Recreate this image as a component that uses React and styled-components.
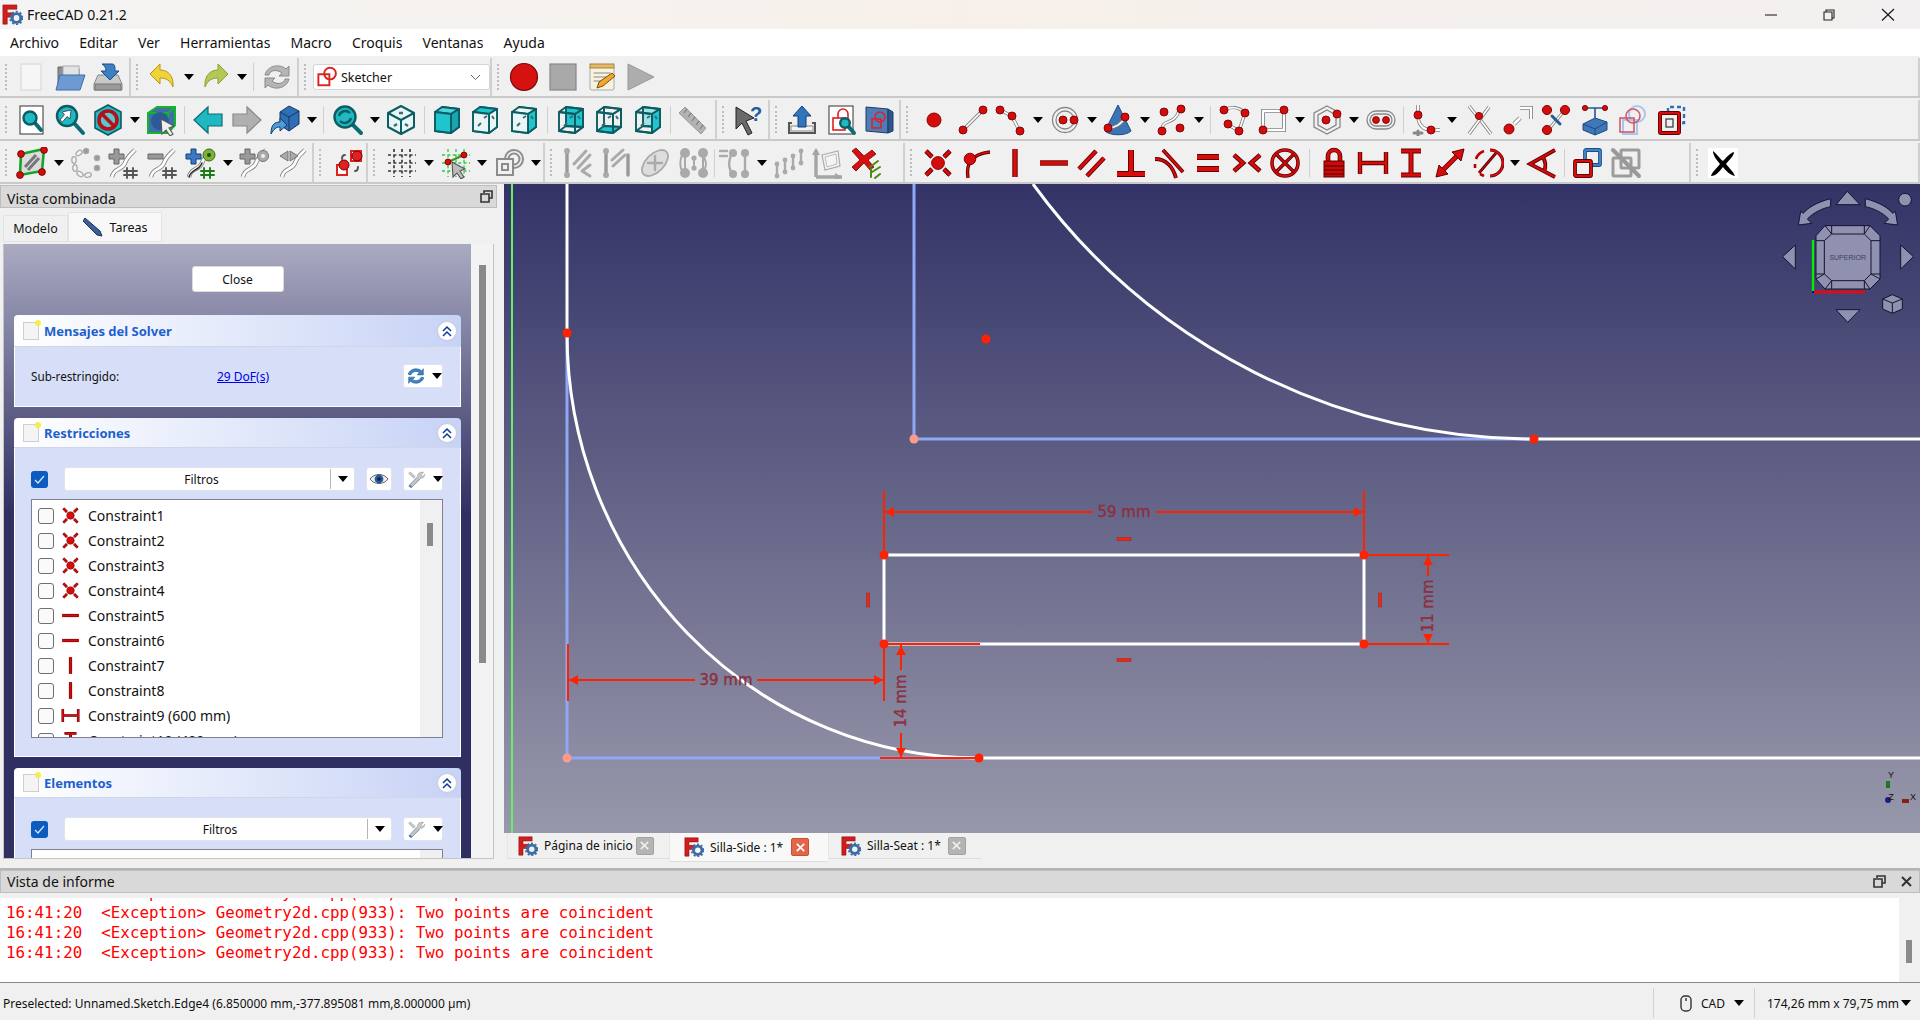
import React from "react";
import styled, { createGlobalStyle } from "styled-components";

const UI_FONT = `"Noto Sans", "Open Sans", sans-serif`;

const GlobalStyle = createGlobalStyle`
  html, body { margin: 0; padding: 0; background: #f0f0f0; }
  * { box-sizing: border-box; }
  body { font-family: ${UI_FONT}; color: #111; overflow: hidden; }
`;

// small drawing helpers for the toolbar icons
const D = ({ x, y, r = 4 }) => <circle cx={x} cy={y} r={r} fill="#d40c0c" stroke="#7a0000" strokeWidth=".9" />;
const W = ({ d, w = 3.4 }) => (
  <>
    <path d={d} fill="none" stroke="#808080" strokeWidth={w} />
    <path d={d} fill="none" stroke="#fff" strokeWidth={w - 1.7} />
  </>
);
const R = ({ d, w = 5 }) => (
  <>
    <path d={d} fill="none" stroke="#5e0000" strokeWidth={w} />
    <path d={d} fill="none" stroke="#d90b0b" strokeWidth={w - 1.8} />
  </>
);
const L = ({ d, c = "#999", w = 3, f = "none", o = 1 }) => (
  <path d={d} fill={f} stroke={c} strokeWidth={w} opacity={o} strokeLinecap="round" strokeLinejoin="round" />
);
const Mag = ({ x = 13, y = 13, r = 8.5, e = 29 }) => (
  <>
    <L d={`M${x + r * 0.7} ${y + r * 0.7}L${e} ${e}`} c="#0b6d74" w={4} />
    <circle cx={x} cy={y} r={r} fill="#1fb9c2" stroke="#0b5c63" strokeWidth="2.4" />
  </>
);
const Box = ({ front = "none", top = "none", side = "none", back = "none", floor = "none", marks }) => (
  <g stroke="#0b5c63" strokeWidth="1.9" strokeLinejoin="round">
    <path d="M11 3L28 5V23L11 22Z" fill={back} />
    <path d="M4 27L11 22L28 23L20 29Z" fill={floor} />
    <path d="M4 8L11 3L28 5L20 10Z" fill={top} />
    <path d="M20 10L28 5V23L20 29Z" fill={side} />
    <path d="M4 8L20 10V29L4 27Z" fill={front} />
    {marks && <path d="M9 22L12 19M15 14L18 12M23 12L25 15" stroke="#3f6a70" strokeWidth="2" fill="none" />}
  </g>
);
const Cursor = ({ x = 14, y = 14, c = "#bbb" }) => (
  <path d={`M${x} ${y}l13 7l-5 2l4 6l-3 2l-4 -6l-4 4z`} fill={c} stroke="#555" strokeWidth="1.1" />
);
const Hash = ({ c = "#555" }) => <L d="M19 21V31M25 21V31M16 24H29M16 28H29" c={c} w={1.9} />;
const Plus = ({ c = "#999", s = "#666" }) => (
  <path d="M6 2h5v5h5v5h-5v5H6v-5H1V7h5z" fill={c} stroke={s} strokeWidth="1" />
);
const Curve = () => <W d="M4 30C6 20 14 24 17 16C19 10 22 8 27 3" w={4.4} />;

const ICONS = {
  new: <rect x="6" y="3" width="20" height="26" fill="#f6f6f6" stroke="#ddd" strokeWidth="1.4" />,
  open: (
    <>
      <path d="M4 6h9l2 2h10v18H4z" fill="#8b8f95" stroke="#666" />
      <rect x="9" y="5" width="16" height="14" fill="#e3e3e3" stroke="#aaa" />
      <path d="M6 14h25l-5 15H2z" fill="#6d9ad2" stroke="#3f6ea8" />
    </>
  ),
  save: (
    <>
      <path d="M6 14h20l4 9v6H2v-6z" fill="#c9c9c9" stroke="#888" />
      <rect x="3" y="23" width="26" height="6" fill="#9a9a9a" stroke="#777" />
      <path d="M10 3h10c3 0 3 3 3 7h4l-9 9l-9-9h5c0-3 -1-5 -4-7z" fill="#3d7fc4" stroke="#1e4d86" />
    </>
  ),
  undo: <path d="M4 13L14 3V9C22 9 28 15 27 26C24 19 20 17 14 17V23Z" fill="#f0d33b" stroke="#b7980f" />,
  redo: <path d="M28 13L18 3V9C10 9 4 15 5 26C8 19 12 17 18 17V23Z" fill="#b3c956" stroke="#8aa030" />,
  refresh: (
    <>
      <path d="M4 14C6 5 18 2 25 8l3-3v10H18l3-3C16 8 9 9 8 14z" fill="#b5b5b5" stroke="#8a8a8a" />
      <path d="M28 18C26 27 14 30 7 24l-3 3V17H14l-3 3C16 24 23 23 24 18z" fill="#b5b5b5" stroke="#8a8a8a" />
    </>
  ),
  sketcher: (
    <>
      <rect x="2" y="12" width="16" height="16" fill="#fff" stroke="#d22" strokeWidth="2.8" />
      <circle cx="19" cy="11" r="8.5" fill="none" stroke="#d22" strokeWidth="2.8" />
    </>
  ),
  refreshBlue: (
    <>
      <path d="M2 13C5 3 19 0 26 7l3-4v11H18l4-4C17 6 9 8 7 14z" fill="#3e82c4" stroke="#1f5a94" />
      <path d="M30 19C27 29 13 32 6 25l-3 4V18H14l-4 4C15 26 23 24 25 18z" fill="#3e82c4" stroke="#1f5a94" />
    </>
  ),
  record: <circle cx="16" cy="16" r="13.5" fill="#d5120f" stroke="#7a0a0a" strokeWidth="1.2" />,
  stop: <rect x="3" y="3" width="26" height="26" fill="#a9a9a9" stroke="#888" strokeWidth="1.2" />,
  macro: (
    <>
      <rect x="5" y="5" width="24" height="24" rx="2" fill="#f7f3e0" stroke="#aaa" />
      <rect x="5" y="3" width="24" height="4" fill="#e3b96b" stroke="#a8843c" />
      <L d="M9 12H25M9 16H25M9 20H18" c="#888" w={1} />
      <path d="M12 27l2-6L27 12l3 3L18 25z" fill="#f0a92c" stroke="#7a4f10" />
    </>
  ),
  play: <path d="M4 3L30 16L4 29Z" fill="#adadad" stroke="#999" />,
  fitAll: (
    <>
      <rect x="5" y="2" width="23" height="28" fill="#fff" stroke="#444" strokeWidth="1.1" />
      <Mag x={15} y={14} r={6.5} e={26} />
    </>
  ),
  fitSel: (
    <>
      <Mag x={13} y={12} r={10} e={29} />
      <path d="M17 6L8 8L10.5 10.5L6 16L8.5 18L13 12.5L16 15Z" fill="#fff" stroke="#333" strokeWidth=".8" />
    </>
  ),
  noDraw: (
    <>
      <path d="M16 1L29 8V24L16 31L3 24V8Z" fill="#1fb9c2" stroke="#0b5c63" strokeWidth="1.6" />
      <circle cx="16" cy="16" r="9" fill="#5ac6ce" stroke="#b5101a" strokeWidth="3.6" />
      <path d="M10 10L22 22" stroke="#b5101a" strokeWidth="3.6" />
    </>
  ),
  select: (
    <>
      <path d="M2 9L11 3H29V21L22 29H2Z" fill="#3e6fa8" stroke="#15b52b" strokeWidth="2" />
      <path d="M2 9H22V29M22 9L29 3" fill="none" stroke="#15b52b" strokeWidth="2" />
      <circle cx="14" cy="17" r="9" fill="#2d5a96" />
      <Cursor x={15} y={15} c="#eee" />
    </>
  ),
  back: <path d="M2 16L16 3V10H30V22H16V29Z" fill="#20b8c0" stroke="#0b6d74" strokeWidth="1.2" />,
  forward: <path d="M30 16L16 3V10H2V22H16V29Z" fill="#b0b0b0" stroke="#8a8a8a" strokeWidth="1.2" />,
  sync: (
    <>
      <path d="M11 8L20 2L30 7V20L20 27L11 21Z" fill="#2f6fb5" stroke="#16375e" />
      <path d="M11 8L20 13L30 7M20 13V27" fill="none" stroke="#16375e" />
      <path d="M2 30C2 20 6 18 11 18V14L18 21L11 27V23C7 23 5 25 2 30Z" fill="#4f9ad8" stroke="#0f3d66" />
    </>
  ),
  zoomSync: (
    <>
      <Mag x={13} y={13} r={10.5} e={29} />
      <path d="M7 12A6.5 6.5 0 0 1 18 9M19 14A6.5 6.5 0 0 1 8 17" fill="none" stroke="#0b5c63" strokeWidth="2.4" />
    </>
  ),
  iso: (
    <g stroke="#0b5c63" strokeWidth="2" fill="none" strokeLinejoin="round">
      <path d="M16 2L29 9V23L16 30L3 23V9Z" fill="#e8f6f6" />
      <path d="M3 9L16 16L29 9M16 16V30" />
      <path d="M9 22L12 20M20 20L23 22M14 9L18 9" strokeWidth="2.4" stroke="#3f6a70" />
    </g>
  ),
  cubeFront: <Box front="#1fc4cc" top="#4ed6dc" side="#18a7ae" />,
  cubeTop: <Box top="#1fc4cc" side="#e8f6f6" front="#e8f6f6" marks />,
  cubeRight: <Box side="#1fc4cc" top="#e8f6f6" front="#e8f6f6" marks />,
  cubeRear: <Box back="#1fc4cc" marks />,
  cubeBottom: <Box floor="#1fc4cc" marks />,
  cubeLeft: <Box back="#9fe4e6" side="#1fc4cc" marks />,
  ruler: (
    <>
      <path d="M8 3L29 24L24 30L2 9Z" fill="#b3b3b3" stroke="#9a9a9a" />
      <path d="M10 5L7 9M14 9L11 13M18 13L15 17M22 17L19 21M26 21L23 25" stroke="#7d7d7d" strokeWidth="1.2" />
    </>
  ),
  whatsThis: (
    <>
      <path d="M4 3L22 14L14 17L20 29L16 31L10 19L4 25Z" fill="#6a6a6a" stroke="#222" />
      <text x="18" y="17" fontSize="20" fontFamily="Liberation Sans" fill="#1f5f9f" fontWeight="700">?</text>
    </>
  ),
  export: (
    <>
      <path d="M6 19H3V29H29V19H26" fill="none" stroke="#555" strokeWidth="2" />
      <rect x="5" y="22" width="22" height="5" fill="#f4f4f4" stroke="#888" />
      <path d="M16 2L25 12H20V23H12V12H7Z" fill="#3176bd" stroke="#113f70" />
    </>
  ),
  pageMag: (
    <>
      <rect x="4" y="2" width="24" height="28" fill="#fff" stroke="#444" strokeWidth="1.1" />
      <rect x="8" y="14" width="12" height="12" fill="none" stroke="#e02020" strokeWidth="1.6" />
      <path d="M13 14V10A5 5 0 0 1 23 10V16" fill="none" stroke="#e02020" strokeWidth="1.6" />
      <Mag x={20} y={19} r={4.8} e={29} />
    </>
  ),
  bluePanel: (
    <>
      <path d="M3 3L25 5V29L3 27Z" fill="#4d7db8" stroke="#1d3d66" />
      <path d="M25 5L30 8V27L25 29Z" fill="#2f5688" stroke="#1d3d66" />
      <rect x="9" y="15" width="9" height="9" fill="none" stroke="#d22" strokeWidth="1.5" />
      <circle cx="17" cy="13" r="5" fill="none" stroke="#d22" strokeWidth="1.5" />
    </>
  ),
  point: <D x={16} y={16} r={7} />,
  line: (
    <>
      <W d="M7 25L25 7" />
      <D x={6} y={26} />
      <D x={26} y={6} />
    </>
  ),
  polyline: (
    <>
      <W d="M5 6L17 12L24 26" />
      <D x={5} y={6} />
      <D x={17} y={12} />
      <D x={25} y={27} />
    </>
  ),
  circle: (
    <>
      <circle cx="16" cy="16" r="12.5" fill="none" stroke="#888" strokeWidth="1.3" />
      <circle cx="16" cy="16" r="9" fill="none" stroke="#888" strokeWidth="1.3" />
      <D x={14} y={16} />
      <D x={25} y={16} />
    </>
  ),
  cone: (
    <>
      <path d="M16 1L29 27C24 32 8 32 3 27Z" fill="#3d74b3" stroke="#1d4a80" />
      <W d="M6 24C13 24 20 20 23 13" />
      <D x={6} y={24} />
      <D x={23} y={13} />
    </>
  ),
  bspline: (
    <>
      <W d="M6 26C6 14 18 22 23 7" />
      <D x={8} y={8} />
      <D x={25} y={5} />
      <D x={6} y={27} />
      <D x={24} y={24} />
    </>
  ),
  arcPoly: (
    <>
      <W d="M5 6C12 2 20 3 26 9L20 27L8 20" />
      <D x={5} y={6} />
      <D x={26} y={9} />
      <D x={9} y={20} />
      <D x={20} y={27} />
    </>
  ),
  rect: (
    <>
      <W d="M5 7H26V26H5Z" w={4} />
      <D x={26} y={6} />
      <D x={5} y={26} />
    </>
  ),
  hexagon: (
    <>
      <path d="M16 2L29 9V23L16 30L3 23V9Z" fill="none" stroke="#888" strokeWidth="1.3" />
      <path d="M16 6L25 11V21L16 26L7 21V11Z" fill="none" stroke="#888" strokeWidth="1.3" />
      <D x={15} y={16} />
      <D x={26} y={10} />
    </>
  ),
  slot: (
    <>
      <rect x="2" y="7" width="28" height="18" rx="9" fill="none" stroke="#888" strokeWidth="1.3" />
      <rect x="5" y="10" width="22" height="12" rx="6" fill="none" stroke="#888" strokeWidth="1.3" />
      <D x={11} y={16} r={3.4} />
      <D x={21} y={16} r={3.4} />
    </>
  ),
  fillet: (
    <>
      <W d="M9 1V12C9 20 14 26 22 26H31" w={3.6} />
      <L d="M9 27V32M5 29H13" c="#888" w={3} />
      <D x={9} y={11} />
      <D x={22} y={26} />
    </>
  ),
  trim: (
    <>
      <W d="M6 2L14 12M16 14L28 30" />
      <W d="M26 3L6 30" />
      <D x={16} y={12} r={3.6} />
    </>
  ),
  extend: (
    <>
      <D x={7} y={25} r={5} />
      <W d="M12 20L18 14" w={4.4} />
      <W d="M18 4H29V15" w={4} />
    </>
  ),
  split: (
    <>
      <W d="M8 26L25 6" w={3} />
      <D x={7} y={6} r={4.6} />
      <D x={25} y={6} r={4.6} />
      <D x={7} y={26} r={4.6} />
      <L d="M12 12L20 20" c="#235a8f" w={3} />
    </>
  ),
  external: (
    <>
      <path d="M4 20L16 14L28 18V26L16 31L4 26Z" fill="#3f78b8" stroke="#1d4a80" />
      <path d="M4 20L16 25L28 18M16 25V31" fill="none" stroke="#1d4a80" />
      <L d="M6 4H26M16 4V14" c="#235a8f" w={1.6} />
      <D x={6} y={4} r={2.6} />
      <D x={26} y={4} r={2.6} />
    </>
  ),
  carbon: (
    <>
      <circle cx="20" cy="10" r="8" fill="none" stroke="#a9c5f0" strokeWidth="2" />
      <rect x="6" y="16" width="14" height="14" fill="none" stroke="#a9c5f0" strokeWidth="2" />
      <circle cx="16" cy="12" r="7" fill="none" stroke="#d05a6a" strokeWidth="1.6" />
      <rect x="3" y="14" width="14" height="14" fill="none" stroke="#d05a6a" strokeWidth="1.6" />
    </>
  ),
  construct: (
    <>
      <path d="M12 8V3H28V19H23" fill="none" stroke="#2f6fb5" strokeWidth="2.4" strokeDasharray="4 3" />
      <rect x="4" y="9" width="19" height="20" rx="1" fill="none" stroke="#5e0000" strokeWidth="4" />
      <rect x="4" y="9" width="19" height="20" rx="1" fill="none" stroke="#d90b0b" strokeWidth="2.2" />
      <rect x="10" y="15" width="7" height="8" fill="none" stroke="#333" strokeWidth="1.2" />
    </>
  ),
  newSketch: (
    <>
      <path d="M5 7L28 2L26 24L4 28Z" fill="#dcdcdc" stroke="#13a52a" strokeWidth="2.6" />
      <path d="M9 20L20 8M12 23L23 11" stroke="#777" strokeWidth="3" />
      <D x={5} y={7} r={3.4} />
      <D x={28} y={3} r={3.4} />
      <D x={4} y={28} r={3.4} />
      <D x={26} y={25} r={3.4} />
    </>
  ),
  mapSketch: (
    <g fill="#f2f2f2" stroke="#aaa" strokeWidth="1.3">
      <circle cx="16" cy="4" r="2.6" fill="#999" />
      <ellipse cx="9" cy="6" rx="3.4" ry="2.2" transform="rotate(-35 9 6)" />
      <ellipse cx="4" cy="13" rx="2.2" ry="3.4" />
      <ellipse cx="5" cy="21" rx="2.2" ry="3.4" />
      <ellipse cx="10" cy="27" rx="3.4" ry="2.2" transform="rotate(35 10 27)" />
      <ellipse cx="18" cy="28" rx="3.4" ry="2.2" transform="rotate(-15 18 28)" />
      <circle cx="27" cy="21" r="2.6" fill="#999" />
      <circle cx="27" cy="11" r="2.6" fill="#999" />
    </g>
  ),
  addHash: (
    <>
      <Curve />
      <Plus />
      <Hash />
    </>
  ),
  subHash: (
    <>
      <Curve />
      <path d="M1 7h15v5H1z" fill="#999" stroke="#666" />
      <Hash />
    </>
  ),
  colorHash: (
    <>
      <Curve />
      <L d="M4 30C6 22 14 24 17 16" c="#222" w={1.4} />
      <Plus c="#3d78c4" s="#143e78" />
      <circle cx="24" cy="8" r="6" fill="#7cb23a" stroke="#3e6a10" />
      <circle cx="24" cy="8" r="2" fill="#274a08" />
      <Hash c="#1c7a18" />
    </>
  ),
  addKnot: (
    <>
      <Curve />
      <Plus />
      <circle cx="24" cy="9" r="5.5" fill="#aaa" stroke="#777" />
      <circle cx="24" cy="9" r="2" fill="#eee" />
    </>
  ),
  mergeCurve: (
    <>
      <Curve />
      <path d="M2 9L10 4V14ZM20 9L12 4V14Z" fill="#aaa" stroke="#777" />
    </>
  ),
  switchView: (
    <>
      <rect x="4" y="18" width="10" height="10" fill="#fff" stroke="#d22" strokeWidth="2" />
      <circle cx="11" cy="18" r="5" fill="#d22" stroke="#700" />
      <rect x="18" y="4" width="10" height="10" fill="#fff" stroke="#d22" strokeWidth="2" />
      <circle cx="24" cy="9" r="5" fill="#d22" stroke="#700" />
      <L d="M12 8C9 8 9 11 9 12M22 24C24 24 25 22 25 20" c="#555" w={2} />
    </>
  ),
  grid: (
    <path d="M8 2V30M16 2V30M24 2V30M2 8H30M2 16H30M2 24H30" stroke="#3c3c3c" strokeWidth="1.7" strokeDasharray="3 2.4" fill="none" />
  ),
  snap: (
    <>
      <path d="M8 2V30M16 2V30M24 2V30M2 8H30M2 16H30M2 24H30" stroke="#27d03d" strokeWidth="1.3" strokeDasharray="3 2.4" fill="none" />
      <L d="M8 15L24 8" c="#4a8a2a" w={2.4} />
      <D x={8} y={15} r={3} />
      <D x={24} y={8} r={3} />
      <Cursor x={12} y={15} />
    </>
  ),
  renderOrder: (
    <g fill="#f1f1f1" stroke="#8c8c8c" strokeWidth="2">
      <circle cx="21" cy="12" r="9" />
      <circle cx="21" cy="12" r="5.5" />
      <rect x="4" y="12" width="16" height="16" />
      <rect x="9" y="17" width="6" height="6" />
    </g>
  ),
  symGrey: (
    <>
      <L d="M5 3V29" c="#999" w={3.4} />
      <circle cx="5" cy="4" r="3" fill="#aaa" />
      <circle cx="5" cy="28" r="3" fill="#aaa" />
      <L d="M12 17L24 4M16 21L28 8" c="#aaa" w={3} />
      <L d="M28 18L20 24L28 29" c="#aaa" w={3} />
    </>
  ),
  cloneGrey: (
    <>
      <L d="M5 4V28" c="#999" w={3.4} />
      <circle cx="5" cy="4" r="3" fill="#aaa" />
      <circle cx="5" cy="28" r="3" fill="#aaa" />
      <L d="M11 13L22 3M12 19L24 8" c="#aaa" w={3} />
      <L d="M27 8V28" c="#999" w={3.4} />
    </>
  ),
  ellipseGrey: (
    <>
      <ellipse cx="16" cy="16" rx="16" ry="9" transform="rotate(-45 16 16)" fill="#ddd" stroke="#aaa" strokeWidth="1.8" />
      <L d="M9 16L23 16M16 9L16 23" c="#aaa" w={2.4} />
    </>
  ),
  linkGrey: (
    <g>
      <circle cx="7" cy="6" r="5" fill="#aaa" />
      <circle cx="25" cy="6" r="5" fill="#aaa" />
      <circle cx="7" cy="26" r="5" fill="#aaa" />
      <circle cx="25" cy="26" r="5" fill="#aaa" />
      <L d="M4 8C1 16 2 20 4 24M25 8C29 16 29 20 25 24" c="#aaa" w={2} />
      <L d="M7 10V22M25 10V22M16 11V21" c="#aaa" w={2} />
      <circle cx="16" cy="11" r="2.6" fill="#aaa" />
      <circle cx="16" cy="21" r="2.6" fill="#aaa" />
    </g>
  ),
  copyGrey: (
    <>
      <L d="M1 4H8M1 9H8" c="#aaa" w={2.6} />
      <circle cx="14" cy="6" r="4" fill="#aaa" />
      <circle cx="26" cy="6" r="4" fill="#aaa" />
      <circle cx="14" cy="27" r="4" fill="#aaa" />
      <circle cx="26" cy="27" r="4" fill="#aaa" />
      <L d="M12 8C9 16 10 20 12 25M26 8V25" c="#aaa" w={2.4} />
    </>
  ),
  arrayGrey: (
    <g>
      <L d="M4 18V28M12 14V24M20 10V20M28 4V16" c="#aaa" w={2.4} />
      <circle cx="4" cy="17" r="2.4" fill="#aaa" />
      <circle cx="4" cy="29" r="2.4" fill="#aaa" />
      <circle cx="12" cy="13" r="2.4" fill="#aaa" />
      <circle cx="12" cy="25" r="2.4" fill="#aaa" />
      <circle cx="20" cy="9" r="2.4" fill="#aaa" />
      <circle cx="20" cy="21" r="2.4" fill="#aaa" />
      <circle cx="28" cy="4" r="2.4" fill="#aaa" />
      <circle cx="28" cy="16" r="2.4" fill="#aaa" />
    </g>
  ),
  axesGrey: (
    <>
      <path d="M5 30V3M5 30H31" stroke="#a5a5a5" strokeWidth="3.4" fill="none" />
      <path d="M5 1L1 8H9ZM31 30L24 26V34Z" fill="#a5a5a5" />
      <path d="M11 8L27 4L29 19L14 23Z" fill="#f4f4f4" stroke="#aaa" strokeWidth="1.2" />
      <path d="M14 10L25 7L26 17L16 20Z" fill="none" stroke="#bbb" />
    </>
  ),
  delGreen: (
    <>
      <path d="M2 4L6 1L14 9L22 3L26 7L18 13L24 20L20 23L14 16L6 24L2 20L10 13Z" fill="#d61010" stroke="#700" strokeWidth=".8" />
      <L d="M20 20L28 14M22 25L30 20M21 30L21 22" c="#4c8a10" w={2} />
      <L d="M25 31L30 27" c="#4c8a10" w={2} />
    </>
  ),
  coincident: (
    <>
      <R d="M4 4L10 10M28 4L22 10M4 28L10 22M28 28L22 22" w={4.6} />
      <D x={16} y={16} r={6.4} />
    </>
  ),
  pointOn: (
    <>
      <R d="M7 31C5 18 9 7 29 5" w={3.4} />
      <D x={9} y={12} r={5.8} />
    </>
  ),
  vertical: <R d="M16 2V30" w={5.4} />,
  horizontal: <R d="M2 16H30" w={5.4} />,
  parallel: <R d="M3 22L20 4M11 29L28 11" w={4.6} />,
  perp: <R d="M16 3V26M2 27H30" w={6} />,
  tangent: <R d="M9 3L29 25M1 12C12 12 19 20 22 31" w={3.8} />,
  equal: <R d="M5 10H27M5 22H27" w={6} />,
  symmetric: <R d="M3 8L12 16L3 24M29 8L20 16L29 24" w={4.6} />,
  block: (
    <>
      <circle cx="16" cy="16" r="13" fill="none" stroke="#5e0000" strokeWidth="3.6" />
      <circle cx="16" cy="16" r="13" fill="none" stroke="#d90b0b" strokeWidth="2" />
      <R d="M7 7L25 25M25 7L7 25" w={3.4} />
    </>
  ),
  lock: (
    <>
      <path d="M10 15V9A6 6 0 0 1 22 9V15" fill="none" stroke="#5e0000" strokeWidth="4.6" />
      <path d="M10 15V9A6 6 0 0 1 22 9V15" fill="none" stroke="#d90b0b" strokeWidth="2.8" />
      <rect x="6" y="14" width="20" height="16" fill="#c80a0a" stroke="#5e0000" />
      <path d="M6 19H26M6 23H26M6 27H26" stroke="#7e0000" strokeWidth="1.3" />
    </>
  ),
  distH: <R d="M3 5V27M29 5V27M3 16H29" w={4.4} />,
  distV: <R d="M6 4H26M6 28H26M16 4V28" w={5} />,
  distance: (
    <>
      <R d="M8 24L24 8" w={5} />
      <path d="M30 2L27 14L18 5ZM2 30L5 18L14 27Z" fill="#d90b0b" stroke="#5e0000" />
    </>
  ),
  radius: (
    <>
      <path d="M18 3A13 13 0 0 1 18 29" fill="none" stroke="#5e0000" strokeWidth="3.2" />
      <path d="M18 3A13 13 0 0 1 18 29" fill="none" stroke="#d90b0b" strokeWidth="1.8" />
      <path d="M12 4A13 13 0 0 0 4 12M3 17V21M8 27L12 29" fill="none" stroke="#b00" strokeWidth="2.6" />
      <R d="M7 26L24 6" w={2.8} />
    </>
  ),
  angle: <R d="M29 3L4 17L29 30M16 9C20 14 20 20 18 25" w={3.8} />,
  refToggle: (
    <>
      <rect x="13" y="3" width="15" height="15" rx="1" fill="none" stroke="#1c4f86" strokeWidth="3.8" />
      <rect x="13" y="3" width="15" height="15" rx="1" fill="none" stroke="#3f83c6" strokeWidth="2" />
      <rect x="3" y="14" width="16" height="15" rx="1" fill="#f0f0f0" stroke="#5e0000" strokeWidth="3.8" />
      <rect x="3" y="14" width="16" height="15" rx="1" fill="none" stroke="#d90b0b" strokeWidth="2" />
    </>
  ),
  activeToggle: (
    <>
      <rect x="11" y="3" width="18" height="18" rx="1" fill="none" stroke="#9c9c9c" strokeWidth="3" />
      <rect x="3" y="11" width="18" height="18" rx="1" fill="none" stroke="#9c9c9c" strokeWidth="3" />
      <path d="M3 3L29 29" stroke="#999" strokeWidth="4" strokeLinecap="round" />
    </>
  ),
  bigX: (
    <>
      <rect x="1" y="1" width="30" height="30" fill="#fff" />
      <path d="M6 4C11 8 13 12 16 14C19 11 23 6 27 5C27 9 22 13 19 17C22 21 26 24 28 29C23 28 19 24 16 20C13 24 9 29 4 29C5 25 10 21 13 17C10 13 6 9 6 4Z" fill="#000" />
    </>
  ),
  wrench: (
    <>
      <path d="M3 27L17 12L21 16L7 30Z" fill="#3e82c4" stroke="#23578c" strokeWidth=".8" />
      <path d="M5 3L14 11L11 14L3 6ZM28 4L24 8L26 11L30 7C30 12 26 15 22 14L9 28L5 25L18 11C16 7 22 2 28 4Z" fill="#c7c7c7" stroke="#999" strokeWidth=".8" />
    </>
  ),
};

const Glyph = styled.svg`
  display: block;
  flex: none;
`;

const Icon = ({ name, size = 32 }) => (
  <Glyph viewBox="0 0 32 32" width={size} height={size}>
    {ICONS[name]}
  </Glyph>
);

const Logo = ({ size = 20 }) => (
  <Glyph viewBox="0 0 24 24" width={size} height={size}>
    <path d="M1 1H17V6H6V10H13V15H6V23H1Z" fill="#d41c1c" stroke="#7a0c0c" strokeWidth=".6" />
    <circle cx="16.5" cy="16" r="5" fill="none" stroke="#3c6ba5" strokeWidth="3.4" />
    <circle cx="16.5" cy="16" r="7.2" fill="none" stroke="#3c6ba5" strokeWidth="2" strokeDasharray="2.4 2.2" />
  </Glyph>
);

const Page = styled.div`
  width: 1920px;
  height: 1020px;
  display: flex;
  flex-direction: column;
  overflow: hidden;
  background: #f0f0f0;
`;

const TitleBar = styled.header`
  height: 29px;
  flex: none;
  display: flex;
  align-items: center;
  padding-left: 2px;
  background: linear-gradient(90deg, #f4f4f4, #f7f0ea 50%, #f2f0f0);
  font-size: 14px;
`;

const TitleText = styled.span`
  margin-left: 4px;
  flex: 1;
`;

const WinButtons = styled.div`
  display: flex;
  align-items: center;
  padding-right: 1px;
  gap: 26px;
`;

const MenuBar = styled.nav`
  height: 27px;
  flex: none;
  display: flex;
  align-items: center;
  padding-left: 10px;
  gap: 20.2px;
  background: #fff;
  font-size: 14px;
`;

const ToolRow = styled.div`
  height: ${(p) => p.$h}px;
  flex: none;
  display: flex;
  padding-top: 2px;
  border-bottom: 2px solid #c9c9c9;
  background: #f0f0f0;
`;

const ToolGroup = styled.div`
  width: ${(p) => p.$w}px;
  flex: ${(p) => (p.$w ? "none" : "1")};
  display: flex;
  align-items: center;
  border-right: 2px solid #d0d0d0;
`;

const Grip = styled.span`
  width: ${(p) => p.$w}px;
  height: 100%;
  flex: none;
  padding: 6px 0 6px 5px;

  &::before {
    content: "";
    display: block;
    height: 100%;
    border-left: 2px dotted #bdbdbd;
  }
`;

const ToolCell = styled.span`
  width: 38.6px;
  flex: none;
  display: flex;
  justify-content: center;
`;

const DropCell = styled.span`
  width: 15px;
  flex: none;
  display: flex;
  justify-content: center;
`;

const Caret = styled.i`
  display: block;
  width: 0;
  height: 0;
  border-left: 5px solid transparent;
  border-right: 5px solid transparent;
  border-top: 6px solid ${(p) => p.$c || "#000"};
`;

const Gap = styled.span`
  width: ${(p) => p.$w}px;
  height: 28px;
  flex: none;
  display: flex;
  justify-content: center;

  &::before {
    content: "";
    width: 1px;
    background: #cfcfcf;
  }
`;

const WorkbenchCombo = styled.div`
  width: 177px;
  height: 26px;
  flex: none;
  display: flex;
  align-items: center;
  gap: 2px;
  padding: 0 8px 0 3px;
  background: #fff;
  border: 1px solid #d5d5d5;
  border-radius: 3px;
  font-size: 12.5px;

  span {
    flex: 1;
  }
`;

const Main = styled.div`
  height: 684px;
  flex: none;
  display: flex;
`;

const LeftDock = styled.aside`
  width: 504px;
  flex: none;
  padding-top: 1px;
  display: flex;
  flex-direction: column;
`;

const DockTitle = styled.div`
  width: ${(p) => p.$w || "auto"};
  height: 23px;
  flex: none;
  display: flex;
  align-items: center;
  justify-content: space-between;
  padding: 0 ${(p) => (p.$w ? 3 : 7)}px 0 6px;
  background: #d9d9d9;
  border: 1px solid #bdbdbd;
  font-size: 14px;
`;

const DockLabel = styled.span`
  margin-top: ${(p) => p.$shift || 0}px;
`;

const TabRow = styled.div`
  height: 36px;
  flex: none;
  display: flex;
  align-items: flex-end;
  padding: 0 0 2px 3px;
`;

const DockTab = styled.div`
  width: ${(p) => p.$w}px;
  height: ${(p) => (p.$active ? 30 : 27)}px;
  display: flex;
  align-items: center;
  justify-content: center;
  gap: 7px;
  font-size: 12.5px;
  background: ${(p) => (p.$active ? "#f8f8f8" : "#f0f0f0")};
  border: 1px solid #e3e3e3;
`;

const PanelFrame = styled.div`
  width: 491px;
  margin-left: 3px;
  height: 615px;
  flex: none;
  display: flex;
  background: #fbfbfb;
  border: 1px solid #c4c4c4;
  border-top: 0;
`;

const Panel = styled.div`
  width: 467px;
  flex: none;
  overflow: hidden;
  padding: 22px 10px 0 10px;
  background: linear-gradient(#aaaac2 0, #2f2f62 270px);
`;

const Track = styled.div`
  flex: 1;
  position: relative;
  background: #f3f3f3;
`;

const Thumb = styled.div`
  position: absolute;
  left: ${(p) => p.$x}px;
  top: ${(p) => p.$y}px;
  width: ${(p) => p.$w}px;
  height: ${(p) => p.$h}px;
  background: #8a8a8a;
`;

const CloseButton = styled.div`
  width: 92px;
  height: 26px;
  margin: 0 auto 23px;
  display: flex;
  align-items: center;
  justify-content: center;
  background: #fff;
  border: 1px solid #dcdcdc;
  border-radius: 3px;
  font-size: 12px;
`;

const TaskBox = styled.section`
  width: 447px;
  margin-bottom: 11px;
`;

const TaskHead = styled.div`
  height: ${(p) => p.$h}px;
  display: flex;
  align-items: center;
  padding: 0 5px 0 9px;
  gap: 5px;
  border-radius: 4px 4px 0 0;
  background: linear-gradient(90deg, #fff, #c7d3f6);
  border-bottom: 1px solid #cfd6e6;
  color: #215fcf;
  font-size: 13px;
  font-weight: 700;

  span {
    flex: 1;
  }
`;

const NoteIcon = styled.i`
  display: block;
  width: 16px;
  height: 18px;
  position: relative;
  background: #f4f4f4;
  border: 1px solid #cfcfcf;

  &::after {
    content: "";
    position: absolute;
    right: -3px;
    top: -3px;
    width: 6px;
    height: 6px;
    border-radius: 50%;
    background: #f4ee4a;
  }
`;

const FoldButton = styled.i`
  width: 18px;
  height: 18px;
  display: flex;
  align-items: center;
  justify-content: center;
  border-radius: 50%;
  background: #fff;
  box-shadow: 0 0 0 1.5px #c8cfe6;
`;

const TaskBody = styled.div`
  height: ${(p) => p.$h}px;
  padding: ${(p) => p.$pad || "19px 17px 0 16px"};
  background: #d6dff7;
  border: 1px solid #fff;
  border-top: 0;
  overflow: hidden;
`;

const SolverRow = styled.div`
  height: 24px;
  display: flex;
  align-items: center;
  font-size: 11.7px;
`;

const SolverLabel = styled.span`
  width: 186px;
`;

const DofLink = styled.a`
  flex: 1;
  font-size: 12px;
  color: #0000ee;
  text-decoration: underline;
`;

const SplitButton = styled.div`
  width: 40px;
  height: 24px;
  flex: none;
  display: flex;
  align-items: center;
  padding-left: 3px;
  background: #fff;
  border: 1px solid #dfe3ef;
  border-radius: 3px;

  ${Caret} {
    margin-left: 6px;
  }
`;

const SplitLine = styled.b`
  width: 1px;
  height: 20px;
  margin-left: 1px;
  background: #b5b5b5;
`;

const FilterRow = styled.div`
  height: 24px;
  display: flex;
  align-items: center;
  gap: 11px;
  margin-bottom: 8px;
`;

const CheckBlue = styled.span`
  width: 17px;
  height: 17px;
  margin-right: 5px;
  flex: none;
  display: flex;
  align-items: center;
  justify-content: center;
  border-radius: 3px;
  background: #0c5cbf;
`;

const FilterCombo = styled.div`
  flex: 1;
  height: 24px;
  display: flex;
  align-items: center;
  background: #fff;
  border: 1px solid #dfe3ef;
  border-radius: 3px;
  font-size: 12px;

  span {
    flex: 1;
    padding-left: 9px;
    text-align: center;
  }

  ${Caret} {
    margin: 0 6px 0 7px;
  }
`;

const EyeButton = styled.div`
  width: 26px;
  height: 24px;
  flex: none;
  display: flex;
  align-items: center;
  justify-content: center;
  background: #fff;
  border: 1px solid #dfe3ef;
  border-radius: 3px;
`;

const ListBox = styled.div`
  height: ${(p) => p.$h}px;
  display: flex;
  background: #fff;
  border: 1px solid #7e8290;
  overflow: hidden;
`;

const ListItems = styled.div`
  flex: 1;
  padding: 3px 0 0 6px;
`;

const ListTrack = styled.div`
  width: 22px;
  flex: none;
  position: relative;
  background: #f0f0f0;
`;

const ListRow = styled.div`
  height: 25px;
  display: flex;
  align-items: center;
  font-size: 14px;
`;

const RowCheck = styled.span`
  width: 16px;
  height: 16px;
  flex: none;
  border: 1px solid #6f6f6f;
  border-radius: 3px;
  background: #fafafa;
  margin-right: 7px;
`;

const RowText = styled.span`
  margin-left: 8px;
`;

const Right = styled.div`
  flex: 1;
  min-width: 0;
  display: flex;
  flex-direction: column;
`;

const Viewport = styled.div`
  height: 649px;
  flex: none;
  position: relative;
  overflow: hidden;
  background: linear-gradient(#333367, #9898ab);
`;

const Overlay = styled.svg`
  position: absolute;
  display: block;
  ${(p) => (p.$cube ? "right: 0; top: 0;" : "left: 0; top: 0;")}
`;

const DocTabs = styled.div`
  height: 35px;
  flex: none;
  display: flex;
  align-items: flex-start;
  padding-left: 3px;
`;

const DocTab = styled.div`
  width: ${(p) => p.$w}px;
  height: ${(p) => (p.$active ? 29 : 26)}px;
  flex: none;
  display: flex;
  align-items: center;
  padding-left: ${(p) => p.$pad}px;
  font-size: 12px;
  background: ${(p) => (p.$active ? "#f8f8f8" : "#f0f0f0")};
  border-bottom: 1px solid #dedede;
  border-left: 1px solid #e6e6e6;

  span {
    margin: 0 ${(p) => p.$gap}px 0 6px;
  }
`;

const TabClose = styled.i`
  width: 18px;
  height: 18px;
  flex: none;
  display: flex;
  align-items: center;
  justify-content: center;
  background: ${(p) => (p.$active ? "#e2674a" : "#b4b4b4")};
  border: 1px solid ${(p) => (p.$active ? "#c9502f" : "#a2a2a2")};
  border-radius: 2px;
`;

const ReportDock = styled.section`
  height: 115px;
  flex: none;
  display: flex;
  flex-direction: column;
  border-top: 2px solid #b4b4b4;
`;

const ReportButtons = styled.div`
  display: flex;
  align-items: center;
  gap: 15px;
`;

const LogWrap = styled.div`
  flex: 1;
  margin-top: 5px;
  display: flex;
  min-height: 0;
  overflow: hidden;
  background: #fff;
  border-bottom: 1px solid #8a8a8a;
`;

const LogText = styled.pre`
  flex: 1;
  margin: -15px 0 0;
  padding-left: 6px;
  color: #f00;
  font: 15.83px/20px "DejaVu Sans Mono", "Liberation Mono", monospace;
`;

const LogTrack = styled.div`
  width: 21px;
  flex: none;
  position: relative;
  background: #f0f0f0;
`;

const StatusBar = styled.footer`
  height: 37px;
  flex: none;
  display: flex;
  align-items: center;
  padding: 3px 0 0 3px;
  font-size: 12px;
`;

const StatusMessage = styled.span`
  flex: 1;
`;

const StatusCell = styled.div`
  width: ${(p) => p.$w}px;
  height: 30px;
  flex: none;
  display: flex;
  align-items: center;
  gap: ${(p) => p.$gap || 0}px;
  padding-left: ${(p) => p.$pad}px;
  border-left: 1px solid #d0d0d0;
`;

const ROW1 = [
  { w: 131, pad: 11.7, items: ["new", "open", "save"] },
  { w: 168, pad: 11.7, items: ["undo", "v", "redo", "v", 8, "refresh"] },
  { w: 193, pad: 14, combo: true, items: [] },
  { pad: 12.7, items: ["record", "stop", "macro", "play"] },
];

const ROW2 = [
  {
    w: 717,
    pad: 11.7,
    items: [
      "fitAll", "fitSel", "noDraw", "v", "select", 7.6, "back", "forward", "sync", "v", 9, "zoomSync", "v", "iso", 6.8,
      "cubeFront", "cubeTop", "cubeRight", 8.2, "cubeRear", "cubeBottom", "cubeLeft", 6.2, "ruler",
    ],
  },
  { w: 53, pad: 11.7, items: ["whatsThis"] },
  { w: 131, pad: 12.7, items: ["export", "pageMag", "bluePanel"] },
  {
    pad: 13.7,
    items: [
      "point", "line", "polyline", "v", "circle", "v", "cone", "v", "bspline", "v", 9.4, "arcPoly", "rect", "v", "hexagon", "v",
      "slot", 6, "fillet", "v", "trim", "extend", "split", "external", "carbon", "construct",
    ],
  },
];

const ROW3 = [
  { w: 314, pad: 12.7, items: ["newSketch", "v", "mapSketch", "addHash", "subHash", "colorHash", "v", "addKnot", "mergeCurve"] },
  { w: 54, pad: 15.7, items: ["switchView"] },
  { w: 177, pad: 14.7, items: ["grid", "v", "snap", "v", "renderOrder", "v"] },
  { w: 360, pad: 13.7, items: ["symGrey", "cloneGrey", "ellipseGrey", "linkGrey", 2.6, "copyGrey", "v", "arrayGrey", "axesGrey", "delGreen"] },
  {
    w: 786,
    pad: 13.7,
    items: [
      "coincident", "pointOn", "vertical", "horizontal", "parallel", "perp", "tangent", "equal", "symmetric", "block", 10,
      "lock", "distH", "distV", "distance", "radius", "v", "angle", 7.4, "refToggle", "activeToggle",
    ],
  },
  { pad: 12.7, items: ["bigX"] },
];

const CONSTRAINTS = [
  ["coincident", "Constraint1"],
  ["coincident", "Constraint2"],
  ["coincident", "Constraint3"],
  ["coincident", "Constraint4"],
  ["horizontal", "Constraint5"],
  ["horizontal", "Constraint6"],
  ["vertical", "Constraint7"],
  ["vertical", "Constraint8"],
  ["distH", "Constraint9 (600 mm)"],
  ["distV", "Constraint10 (400 mm)"],
];

const LOG_LINE = "16:41:20  <Exception> Geometry2d.cpp(933): Two points are coincident";

function Toolbar({ groups, h }) {
  return (
    <ToolRow $h={h}>
      {groups.map((group, i) => (
        <ToolGroup key={i} $w={group.w}>
          <Grip $w={group.pad} />
          {group.combo && (
            <WorkbenchCombo>
              <Icon name="sketcher" size={22} />
              <span>Sketcher</span>
              <svg width="11" height="7" viewBox="0 0 11 7">
                <path d="M1 1l4.5 4.5L10 1" fill="none" stroke="#666" />
              </svg>
            </WorkbenchCombo>
          )}
          {group.items.map((item, j) =>
            item === "v" ? (
              <DropCell key={j}>
                <Caret />
              </DropCell>
            ) : typeof item === "number" ? (
              <Gap key={j} $w={item} />
            ) : (
              <ToolCell key={j}>
                <Icon name={item} />
              </ToolCell>
            )
          )}
        </ToolGroup>
      ))}
    </ToolRow>
  );
}

const Fold = () => (
  <FoldButton>
    <svg width="12" height="12" viewBox="0 0 12 12">
      <path d="M2 6l4-4l4 4M2 11l4-4l4 4" fill="none" stroke="#0a3a9a" strokeWidth="1.5" />
    </svg>
  </FoldButton>
);

const Tick = () => (
  <svg width="11" height="9" viewBox="0 0 11 9">
    <path d="M1 5l3 3l6-7" fill="none" stroke="#dce8fa" strokeWidth="1.2" />
  </svg>
);

const Eye = () => (
  <svg width="20" height="14" viewBox="0 0 20 14">
    <path d="M1 7C5 1 15 1 19 7C15 13 5 13 1 7Z" fill="#eee" stroke="#666" />
    <circle cx="10" cy="7" r="4.4" fill="#27599e" />
    <circle cx="10" cy="7" r="1.8" fill="#0d2345" />
  </svg>
);

const Restore = () => (
  <svg width="13" height="13" viewBox="0 0 13 13">
    <path d="M4 3V1H12V8H9.5M1 4H9V12H1Z" fill="none" stroke="#333" strokeWidth="1.6" />
  </svg>
);

const CloseX = ({ c = "#333", s = 11, w = 2 }) => (
  <svg width={s} height={s} viewBox="0 0 11 11">
    <path d="M1 1L10 10M10 1L1 10" stroke={c} strokeWidth={w} fill="none" />
  </svg>
);

function TaskPanel() {
  return (
    <Panel>
      <CloseButton>Close</CloseButton>
      <TaskBox>
        <TaskHead $h={32}>
          <NoteIcon />
          <span>Mensajes del Solver</span>
          <Fold />
        </TaskHead>
        <TaskBody $h={60} $pad="17px 17px 0 16px">
          <SolverRow>
            <SolverLabel>Sub-restringido:</SolverLabel>
            <DofLink>29 DoF(s)</DofLink>
            <SplitButton>
              <Icon name="refreshBlue" size={18} />
              <SplitLine />
              <Caret />
            </SplitButton>
          </SolverRow>
        </TaskBody>
      </TaskBox>
      <TaskBox>
        <TaskHead $h={30}>
          <NoteIcon />
          <span>Restricciones</span>
          <Fold />
        </TaskHead>
        <TaskBody $h={309}>
          <FilterRow>
            <CheckBlue>
              <Tick />
            </CheckBlue>
            <FilterCombo>
              <span>Filtros</span>
              <SplitLine />
              <Caret />
            </FilterCombo>
            <EyeButton>
              <Eye />
            </EyeButton>
            <SplitButton>
              <Icon name="wrench" size={19} />
              <SplitLine />
              <Caret />
            </SplitButton>
          </FilterRow>
          <ListBox $h={239}>
            <ListItems>
              {CONSTRAINTS.map(([icon, label]) => (
                <ListRow key={label}>
                  <RowCheck />
                  <Icon name={icon} size={19} />
                  <RowText>{label}</RowText>
                </ListRow>
              ))}
            </ListItems>
            <ListTrack>
              <Thumb $x={7} $y={23} $w={6} $h={23} />
            </ListTrack>
          </ListBox>
        </TaskBody>
      </TaskBox>
      <TaskBox>
        <TaskHead $h={30}>
          <NoteIcon />
          <span>Elementos</span>
          <Fold />
        </TaskHead>
        <TaskBody $h={120}>
          <FilterRow>
            <CheckBlue>
              <Tick />
            </CheckBlue>
            <FilterCombo>
              <span>Filtros</span>
              <SplitLine />
              <Caret />
            </FilterCombo>
            <SplitButton>
              <Icon name="wrench" size={19} />
              <SplitLine />
              <Caret />
            </SplitButton>
          </FilterRow>
          <ListBox $h={30}>
            <ListItems />
            <ListTrack />
          </ListBox>
        </TaskBody>
      </TaskBox>
    </Panel>
  );
}

const RED = "#ff2200";
const DIM = { fill: "none", stroke: RED, strokeWidth: 2 };

const Head = ({ x, y, dir }) => {
  const s = { l: `${x},${y} ${x + 9},${y - 5} ${x + 9},${y + 5}`, r: `${x},${y} ${x - 9},${y - 5} ${x - 9},${y + 5}`, u: `${x},${y} ${x - 5},${y + 9} ${x + 5},${y + 9}`, d: `${x},${y} ${x - 5},${y - 9} ${x + 5},${y - 9}` };
  return <polygon points={s[dir]} fill={RED} />;
};

const Mark = ({ x, y, v }) => (
  <rect x={v ? x - 1.5 : x - 7} y={v ? y - 7 : y - 1.5} width={v ? 3 : 14} height={v ? 14 : 3} fill={RED} stroke="#8a3040" strokeWidth=".6" />
);

const DimLabel = ({ x, y, rot, children }) => (
  <text
    x={x}
    y={y}
    transform={rot ? `rotate(-90 ${x} ${y})` : undefined}
    textAnchor="middle"
    dominantBaseline="central"
    fontFamily="DejaVu Sans"
    fontSize="15"
    fill="#8c2f3e"
    stroke="#8c2f3e"
    strokeWidth=".35"
  >
    {children}
  </text>
);

const Node = ({ x, y, c = RED, r = 4.5 }) => <circle cx={x} cy={y} r={r} fill={c} />;

function Sketch() {
  return (
    <Overlay viewBox="504 184 1416 649" width="1416" height="649">
      <path d="M512 184V833" stroke="#66ee66" strokeWidth="2" />
      {/* back pieces, construction lines */}
      <g fill="none" stroke="#8fa8f5" strokeWidth="3">
        <path d="M914 184V439H1534" />
        <path d="M567 333V758H980" />
      </g>
      <g fill="none" stroke="#fff" strokeWidth="3">
        <path d="M567 184V333" />
        <path d="M567 333A412 425 0 0 0 979 758H1920" />
        <path d="M1033 184A620 620 0 0 0 1534 439H1920" />
        <path d="M884 555H1364V644H884Z" />
      </g>
      <g {...DIM}>
        <path d="M884 491V555M1364 491V555M884 512H1093M1156 512H1364" />
        <path d="M1364 555H1449M1364 644H1449M1428 556V576M1428 635V644" />
        <path d="M568 644V701M884 644V701M568 680H695M757 680H884" />
        <path d="M884 644H980M880 758H979M901 645V670M901 733V757" />
      </g>
      <Head x={885} y={512} dir="l" />
      <Head x={1363} y={512} dir="r" />
      <Head x={1428} y={556} dir="u" />
      <Head x={1428} y={643} dir="d" />
      <Head x={569} y={680} dir="l" />
      <Head x={883} y={680} dir="r" />
      <Head x={901} y={646} dir="u" />
      <Head x={901} y={757} dir="d" />
      <DimLabel x={1124} y={512}>59 mm</DimLabel>
      <DimLabel x={726} y={680}>39 mm</DimLabel>
      <DimLabel x={1428} y={606} rot>11 mm</DimLabel>
      <DimLabel x={901} y={701} rot>14 mm</DimLabel>
      <Mark x={1124} y={539} />
      <Mark x={1124} y={660} />
      <Mark x={868} y={600} v />
      <Mark x={1380} y={600} v />
      <Node x={567} y={333} />
      <Node x={986} y={339} />
      <Node x={884} y={555} />
      <Node x={1364} y={555} />
      <Node x={884} y={644} />
      <Node x={1364} y={644} />
      <Node x={979} y={758} />
      <Node x={1534} y={439} />
      <Node x={914} y={439} c="#ff9a8a" />
      <Node x={567} y={758} c="#ff9a8a" />
      {/* corner axis cross */}
      <rect x="1886" y="781" width="4" height="7" fill="#1c7a1c" />
      <circle cx="1888" cy="800" r="3" fill="#1c1c8a" />
      <rect x="1902" y="799" width="7" height="4" fill="#8a1c1c" />
      <g fontFamily="Liberation Sans" fontSize="9" fill="#111" textAnchor="middle">
        <text x="1891" y="778">Y</text>
        <text x="1891" y="800">Z</text>
        <text x="1913" y="800">X</text>
      </g>
    </Overlay>
  );
}

function NavCube() {
  return (
    <Overlay $cube viewBox="0 0 450 450" width="150" height="150">
      <g fill="#9091b0" stroke="#14142e" strokeWidth="3" strokeLinejoin="round">
        <polygon points="198,62 232,22 270,62" />
        <circle cx="405" cy="47" r="19" />
        <path d="M182 44C140 55 112 72 100 88L92 82L85 123L125 118L112 105C130 85 160 72 182 68Z" />
        <path d="M286 44C328 55 356 72 368 88L376 82L383 123L343 118L356 105C338 85 308 72 286 68Z" />
        <polygon points="76,183 38,218 76,255" />
        <polygon points="392,183 430,218 392,255" />
        <polygon points="198,377 270,377 233,415" />
        <polygon points="165,125 300,125 330,155 330,285 300,315 165,315 138,285 138,155" />
        <polygon points="185,150 283,150 303,170 303,270 283,290 185,290 163,270 163,170" />
        <path d="M185 125V150M283 125V150M138 170H163M138 270H163M303 170H330M303 270H330M185 290V315M283 290V315M165 125L185 150M300 125L283 150M138 285L163 270M330 285L303 270M165 315L185 290M300 315L283 290" fill="none" />
        <polygon points="338,345 367,332 397,345 397,375 367,388 338,375" />
        <path d="M338 345L367 357L397 345M367 357V388" fill="none" />
      </g>
      <text x="233" y="219" textAnchor="middle" dominantBaseline="central" fontFamily="Liberation Sans" fontSize="21" fill="#3d3f5f">
        SUPERIOR
      </text>
      <path d="M129 168V325" stroke="#00ee00" strokeWidth="7" />
      <path d="M132 324H285" stroke="#ff0000" strokeWidth="7" />
      <rect x="126" y="321" width="6" height="6" fill="#0000cc" />
    </Overlay>
  );
}

export default function App() {
  return (
    <Page>
      <GlobalStyle />
      <TitleBar>
        <Logo size={21} />
        <TitleText>FreeCAD 0.21.2</TitleText>
        <WinButtons>
          <svg width="46" height="12" viewBox="0 0 46 12">
            <path d="M14 6H26" stroke="#111" />
          </svg>
          <svg width="12" height="12" viewBox="0 0 12 12">
            <path d="M3 2.5V1H11V9H9.5M1 3H9V11H1Z" fill="none" stroke="#222" strokeWidth="1.1" />
          </svg>
          <svg width="58" height="13" viewBox="0 0 58 13">
            <path d="M21 1L33 12.5M33 1L21 12.5" stroke="#111" strokeWidth="1.1" />
          </svg>
        </WinButtons>
      </TitleBar>
      <MenuBar>
        {["Archivo", "Editar", "Ver", "Herramientas", "Macro", "Croquis", "Ventanas", "Ayuda"].map((item) => (
          <span key={item}>{item}</span>
        ))}
      </MenuBar>
      <Toolbar groups={ROW1} h={42} />
      <Toolbar groups={ROW2} h={43} />
      <Toolbar groups={ROW3} h={43} />
      <Main>
        <LeftDock>
          <DockTitle $w="497px">
            <DockLabel $shift={3}>Vista combinada</DockLabel>
            <Restore />
          </DockTitle>
          <TabRow>
            <DockTab $w={65}>Modelo</DockTab>
            <DockTab $w={94} $active>
              <svg width="20" height="20" viewBox="0 0 20 20">
                <path d="M2 1L17 14L19 19L14 18L0 4Z" fill="#3b5f96" stroke="#1d3358" />
              </svg>
              Tareas
            </DockTab>
          </TabRow>
          <PanelFrame>
            <TaskPanel />
            <Track>
              <Thumb $x={8} $y={21} $w={7} $h={398} />
            </Track>
          </PanelFrame>
        </LeftDock>
        <Right>
          <Viewport>
            <Sketch />
            <NavCube />
          </Viewport>
          <DocTabs>
            <DocTab $w={162} $pad={10} $gap={3}>
              <Logo />
              <span>Página de inicio</span>
              <TabClose>
                <CloseX c="#eee" s={9} />
              </TabClose>
            </DocTab>
            <DocTab $w={159} $pad={14} $gap={8} $active>
              <Logo />
              <span>Silla-Side : 1*</span>
              <TabClose $active>
                <CloseX c="#fff" s={9} />
              </TabClose>
            </DocTab>
            <DocTab $w={153} $pad={12} $gap={7}>
              <Logo />
              <span>Silla-Seat : 1*</span>
              <TabClose>
                <CloseX c="#eee" s={9} />
              </TabClose>
            </DocTab>
          </DocTabs>
        </Right>
      </Main>
      <ReportDock>
        <DockTitle>
          Vista de informe
          <ReportButtons>
            <Restore />
            <CloseX />
          </ReportButtons>
        </DockTitle>
        <LogWrap>
          <LogText>{[LOG_LINE, LOG_LINE, LOG_LINE, LOG_LINE].join("\n")}</LogText>
          <LogTrack>
            <Thumb $x={7} $y={42} $w={6} $h={23} />
          </LogTrack>
        </LogWrap>
      </ReportDock>
      <StatusBar>
        <StatusMessage>Preselected: Unnamed.Sketch.Edge4 (6.850000 mm,-377.895081 mm,8.000000 µm)</StatusMessage>
        <StatusCell $w={101} $pad={26} $gap={9}>
          <svg width="12" height="17" viewBox="0 0 12 17">
            <rect x="1" y="1" width="10" height="15" rx="4" fill="none" stroke="#333" strokeWidth="1.4" />
            <path d="M6 3V6" stroke="#333" strokeWidth="1.4" />
          </svg>
          CAD
          <Caret />
        </StatusCell>
        <StatusCell $w={166} $pad={12} $gap={2}>
          174,26 mm x 79,75 mm
          <Caret />
        </StatusCell>
      </StatusBar>
    </Page>
  );
}
